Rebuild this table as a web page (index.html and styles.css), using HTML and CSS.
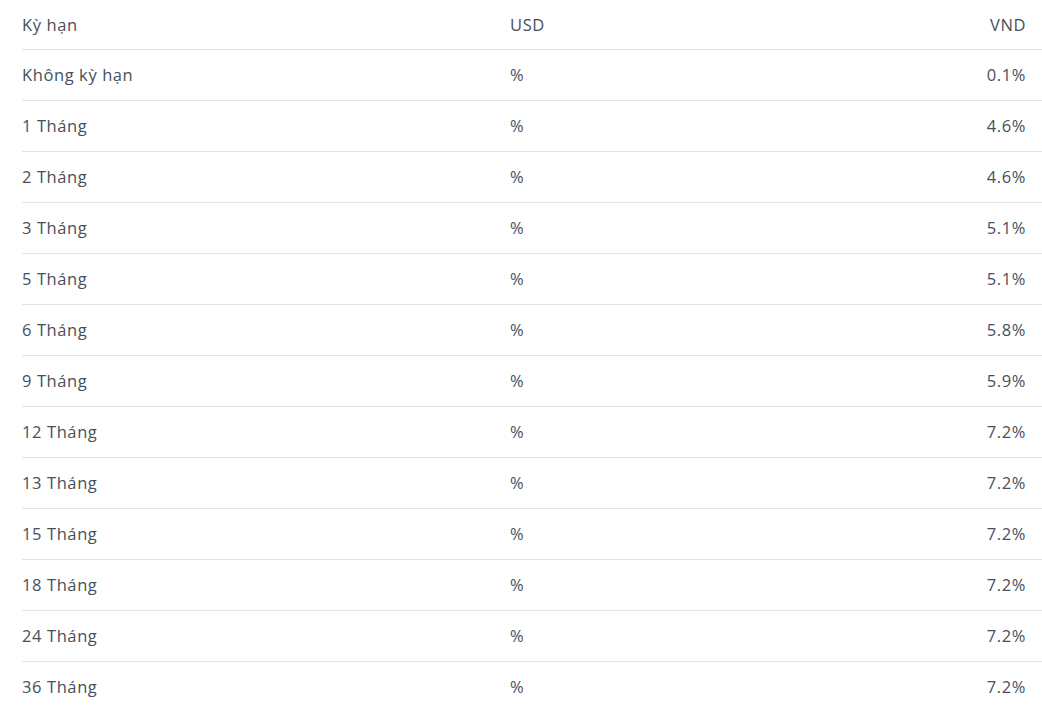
FILE: index.html
```html
<!DOCTYPE html>
<html lang="vi">
<head>
<meta charset="utf-8">
<link rel="stylesheet" href="styles.css">
</head>
<body>
<div class="wrap">
<table class="rates">
  <colgroup><col class="c1"><col class="c2"><col class="c3"></colgroup>
  <thead>
    <tr><th>Kỳ hạn</th><th>USD</th><th class="r">VND</th></tr>
  </thead>
  <tbody>
    <tr><td>Không kỳ hạn</td><td>%</td><td class="r">0.1%</td></tr>
    <tr><td>1 Tháng</td><td>%</td><td class="r">4.6%</td></tr>
    <tr><td>2 Tháng</td><td>%</td><td class="r">4.6%</td></tr>
    <tr><td>3 Tháng</td><td>%</td><td class="r">5.1%</td></tr>
    <tr><td>5 Tháng</td><td>%</td><td class="r">5.1%</td></tr>
    <tr><td>6 Tháng</td><td>%</td><td class="r">5.8%</td></tr>
    <tr><td>9 Tháng</td><td>%</td><td class="r">5.9%</td></tr>
    <tr><td>12 Tháng</td><td>%</td><td class="r">7.2%</td></tr>
    <tr><td>13 Tháng</td><td>%</td><td class="r">7.2%</td></tr>
    <tr><td>15 Tháng</td><td>%</td><td class="r">7.2%</td></tr>
    <tr><td>18 Tháng</td><td>%</td><td class="r">7.2%</td></tr>
    <tr><td>24 Tháng</td><td>%</td><td class="r">7.2%</td></tr>
    <tr><td>36 Tháng</td><td>%</td><td class="r">7.2%</td></tr>
  </tbody>
</table>
</div>
</body>
</html>
```
FILE: styles.css
```css
html, body {
  margin: 0;
  padding: 0;
  background: #ffffff;
}
body {
  font-family: "Open Sans", Lato, sans-serif;
  font-size: 16.5px;
  letter-spacing: 0.6px;
  color: #46505a;
}
.wrap {
  padding-left: 22px;
}
.rates {
  width: 1020px;
  border-collapse: collapse;
  table-layout: fixed;
}
.c1 { width: 488px; }
.c2 { width: auto; }
.c3 { width: 200px; }
.rates th,
.rates td {
  font-weight: 400;
  text-align: left;
  padding: 0 16px 0 0;
  border-bottom: 1px solid #e2e2e2;
  vertical-align: middle;
}
.rates thead tr { height: 49px; }
.rates tbody tr { height: 51px; }
.rates .r { text-align: right; }
```
